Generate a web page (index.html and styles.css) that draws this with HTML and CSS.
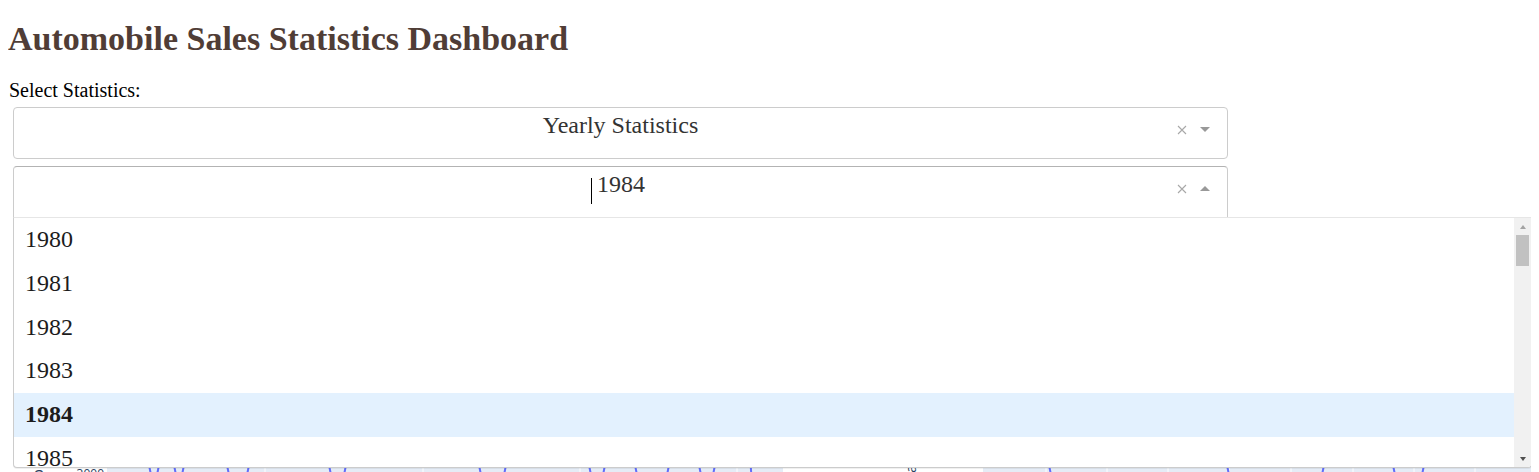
FILE: index.html
```html
<!DOCTYPE html>
<html lang="en">
<head>
<meta charset="utf-8">
<title>Automobile Sales Statistics Dashboard</title>
<link rel="stylesheet" href="styles.css">
</head>
<body>
<div class="app">
  <h1 class="title">Automobile Sales Statistics Dashboard</h1>
  <label class="label">Select Statistics:</label>

  <div class="dropdown dropdown-first">
    <div class="control">
      <div class="value">Yearly Statistics</div>
      <div class="zones">
        <svg class="clear" width="10" height="10" viewBox="0 0 10 10"><path d="M1 1 L9 9 M9 1 L1 9" stroke="#a8a8a8" stroke-width="1.1" fill="none"/></svg>
        <span class="arrow arrow-down"></span>
      </div>
    </div>
  </div>

  <div class="dropdown dropdown-open">
    <div class="control control-open">
      <div class="value value-input"><span class="caret"></span>1984</div>
      <div class="zones">
        <svg class="clear" width="10" height="10" viewBox="0 0 10 10"><path d="M1 1 L9 9 M9 1 L1 9" stroke="#a8a8a8" stroke-width="1.1" fill="none"/></svg>
        <span class="arrow arrow-up"></span>
      </div>
    </div>
    <div class="menu">
      <div class="options">
        <div class="option">1980</div>
        <div class="option">1981</div>
        <div class="option">1982</div>
        <div class="option">1983</div>
        <div class="option option-focused">1984</div>
        <div class="option">1985</div>
        <div class="option">1986</div>
      </div>
      <div class="scrollbar">
        <div class="sb-btn"><span class="sb-up"></span></div>
        <div class="sb-thumb"></div>
        <div class="sb-track"></div>
        <div class="sb-btn"><span class="sb-down"></span></div>
      </div>
    </div>
  </div>

  <div class="charts">
    <div class="graph">
      <div class="yaxis yaxis-1">
        <span class="ytitle">Automobile Sales</span>
        <span class="ytick">3000</span>
      </div>
      <div class="plot plot-1">
        <svg width="676" height="300" viewBox="0 0 676 300">
          <path d="M0 68 H676 M158 0 V300 M316 0 V300 M473 0 V300 M630 0 V300" stroke="#fff" stroke-width="1" fill="none"/>
          <path d="M40 108 L46 138 M54 108 L48 138 M65 108 L71 138 M79 108 L73 138 M118 108 L124 138 M144 108 L138 138 M220 108 L226 138 M241 108 L235 138 M370 108 L376 138 M401 108 L395 138 M480 108 L486 138 M500 108 L494 138 M526 108 L532 138 M564 108 L558 138 M590 108 L596 138 M610 108 L604 138 M643 108 L645 138" stroke="#636efa" stroke-width="2" fill="none"/>
        </svg>
      </div>
    </div>
    <div class="graph">
      <div class="yaxis yaxis-2">
        <span class="ytitle">Sales</span>
      </div>
      <div class="plot plot-2">
        <svg width="700" height="300" viewBox="0 0 700 300">
          <path d="M0 68 H700 M0 160 H700 M63 0 V300 M124 0 V300 M185 0 V300 M246 0 V300 M308 0 V300 M370 0 V300 M431 0 V300 M492 0 V300 M553 0 V300 M614 0 V300" stroke="#fff" stroke-width="1" fill="none"/>
          <path d="M64 108 L70 138 M242 108 L248 138 M343 108 L337 138 M408 108 L414 138 M443 108 L437 138" stroke="#636efa" stroke-width="2" fill="none"/>
        </svg>
      </div>
    </div>
  </div>
</div>
</body>
</html>
```
FILE: styles.css
```css
html {
  overflow: hidden;
}

body {
  margin: 0 8px 8px;
  padding-top: 20px;
  background: #fff;
  color: #000;
  font-family: "Liberation Serif", "Times New Roman", serif;
}

.title {
  margin: 0 0 21px;
  font-size: 34px;
  line-height: 38px;
  font-weight: bold;
  color: #503D36;
}

.label {
  display: block;
  margin-left: 1px;
  font-size: 20px;
  line-height: 23px;
}

.dropdown {
  position: relative;
  width: 1215px;
  margin-left: 5px;
  font-size: 24px;
}

.dropdown-first {
  margin-top: 5px;
}

.dropdown-open {
  margin-top: 7px;
  z-index: 5;
}

.control {
  display: grid;
  grid-template-columns: 1fr;
  grid-template-rows: 1fr;
  box-sizing: border-box;
  height: 52px;
  border: 1px solid #ccc;
  border-radius: 4px;
  background: #fff;
}

.control-open {
  height: 51px;
  border-color: #b3b3b3 #ccc #d9d9d9;
  border-bottom: 0;
  border-radius: 4px 4px 0 0;
}

.value {
  grid-area: 1 / 1;
  align-self: start;
  padding: 0 10px;
  line-height: 34px;
  color: #333;
  text-align: center;
  white-space: nowrap;
}

.value-input {
  padding-right: 15px;
}

.caret {
  display: inline-block;
  width: 1px;
  height: 26px;
  margin-right: 5px;
  background: #000;
  vertical-align: -12px;
}

.zones {
  grid-area: 1 / 1;
  justify-self: end;
  align-self: start;
  display: flex;
  align-items: center;
  height: 9px;
  margin-top: 17px;
  margin-right: 17px;
}

.clear {
  display: block;
  width: 10px;
  height: 10px;
  margin-right: 13px;
}

.arrow {
  display: block;
  width: 0;
  height: 0;
  border-style: solid;
}

.arrow-down {
  border-width: 5px 5px 0;
  border-color: #999 transparent transparent;
}

.arrow-up {
  border-width: 0 5px 5px;
  border-color: transparent transparent #999;
}

.menu {
  position: absolute;
  top: 100%;
  left: 0;
  display: flex;
  box-sizing: border-box;
  width: 1519px;
  height: 251px;
  border: 1px solid #ccc;
  border-top-color: #e6e6e6;
  border-radius: 0 0 4px 4px;
  background: #fff;
  box-shadow: 0 1px 0 rgba(0, 0, 0, 0.06);
  overflow: hidden;
}

.options {
  flex: 1;
  overflow: hidden;
}

.option {
  box-sizing: border-box;
  height: 43.75px;
  padding: 8px 11px;
  line-height: 27.75px;
  color: #1c1c1c;
  white-space: nowrap;
}

.option-focused {
  background: #e3f1fe;
  font-weight: bold;
}

.scrollbar {
  display: flex;
  flex-direction: column;
  flex-shrink: 0;
  width: 17px;
  background: #f1f1f1;
}

.sb-btn {
  display: flex;
  align-items: center;
  justify-content: center;
  height: 17px;
}

.sb-up {
  width: 0;
  height: 0;
  border-style: solid;
  border-width: 0 3.5px 4px;
  border-color: transparent transparent #a3a3a3;
}

.sb-down {
  width: 0;
  height: 0;
  border-style: solid;
  border-width: 4px 3.5px 0;
  border-color: #505050 transparent transparent;
}

.sb-thumb {
  height: 31px;
  margin: 0 2px;
  background: #c1c1c1;
}

.sb-track {
  flex: 1;
}

.charts {
  display: flex;
  margin-top: 130px;
}

.graph {
  display: flex;
  flex-shrink: 0;
}

.yaxis {
  display: flex;
  flex-shrink: 0;
  height: 300px;
  font-family: "Open Sans", "Liberation Sans", sans-serif;
  color: #2a3f5f;
}

.yaxis-1 {
  width: 99px;
}

.yaxis-2 {
  width: 200px;
}

.ytitle {
  margin-top: 70px;
  font-size: 14px;
  line-height: 16px;
  writing-mode: vertical-rl;
  transform: rotate(180deg);
  align-self: flex-start;
}

.yaxis-1 .ytitle {
  margin-left: 22px;
}

.yaxis-2 .ytitle {
  margin-top: 100px;
  margin-left: 120px;
}

.ytick {
  margin-left: auto;
  padding-top: 120px;
  padding-right: 3px;
  font-size: 12px;
  line-height: 14px;
}

.plot {
  flex-shrink: 0;
  height: 300px;
  background: #e5ecf6;
}

.plot svg {
  display: block;
}

.plot-1 {
  width: 676px;
}

.plot-2 {
  width: 700px;
}
```
